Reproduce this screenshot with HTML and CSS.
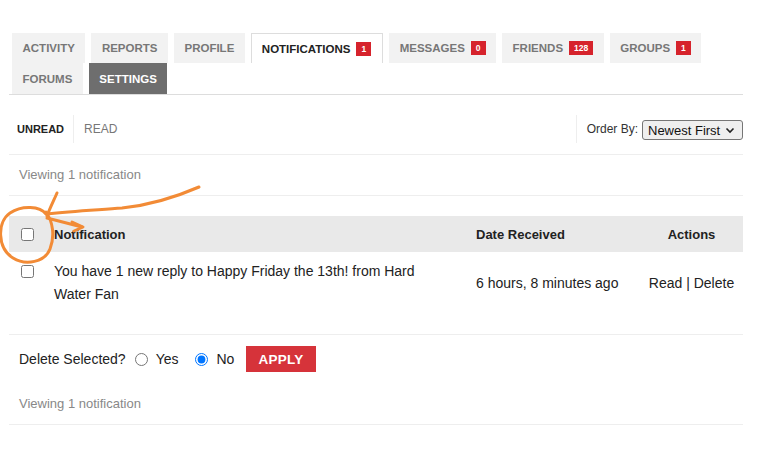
FILE: index.html
```html
<!DOCTYPE html>
<html lang="en">
<head>
<meta charset="utf-8">
<title>Notifications</title>
<link rel="stylesheet" href="styles.css">
</head>
<body>
<div class="page">
  <ul class="tabs">
    <li class="tab">Activity</li>
    <li class="tab">Reports</li>
    <li class="tab">Profile</li>
    <li class="tab current">Notifications <span class="badge">1</span></li>
    <li class="tab">Messages <span class="badge">0</span></li>
    <li class="tab">Friends <span class="badge">128</span></li>
    <li class="tab">Groups <span class="badge">1</span></li>
    <li class="tab">Forums</li>
    <li class="tab dark">Settings</li>
  </ul>

  <div class="subnav">
    <ul class="subtabs">
      <li class="subtab active">Unread</li>
      <li class="subtab">Read</li>
    </ul>
    <div class="order">
      <label class="order-label" for="order">Order By:</label>
      <span class="select-wrap">
        <select id="order" class="select">
          <option>Newest First</option>
          <option>Oldest First</option>
        </select>
        <svg class="chev" width="10" height="7" viewBox="0 0 10 7"><path d="M1.5 1.5 L5 5 L8.5 1.5" fill="none" stroke="#222" stroke-width="1.6"/></svg>
      </span>
    </div>
  </div>

  <div class="count">Viewing 1 notification</div>

  <table class="ntable">
    <thead>
      <tr>
        <th class="c-check"><input type="checkbox" class="cb"></th>
        <th class="c-text">Notification</th>
        <th class="c-date">Date Received</th>
        <th class="c-act">Actions</th>
      </tr>
    </thead>
    <tbody>
      <tr>
        <td class="c-check top"><input type="checkbox" class="cb"></td>
        <td class="c-text">You have 1 new reply to Happy Friday the 13th! from Hard Water Fan</td>
        <td class="c-date">6 hours, 8 minutes ago</td>
        <td class="c-act">Read | Delete</td>
      </tr>
    </tbody>
  </table>

  <div class="bulk">
    <span class="bulk-label">Delete Selected?</span>
    <label class="opt"><input type="radio" name="del" class="radio"> Yes</label>
    <label class="opt"><input type="radio" name="del" class="radio" checked> No</label>
    <button class="apply">APPLY</button>
  </div>

  <div class="count">Viewing 1 notification</div>

  <svg class="scribble" width="766" height="449" viewBox="0 0 766 449">
    <g fill="none" stroke="#f28b36" stroke-width="3" stroke-linecap="round" stroke-linejoin="round">
      <path d="M46 214 C40 206 22 205 10 213 C-3 222 -3 248 13 258 C26 266 45 262 50 249 C55 236 53 222 46 212"/>
      <path d="M57 193 C54 200 50 208 47 216"/>
      <path d="M199 187 C176 197 152 205 122 208 C96 210 72 211 47 214"/>
      <path d="M47 218 L82 227"/>
      <path d="M72 222 L83 227 L74 231"/>
    </g>
  </svg>
</div>
</body>
</html>
```

FILE: styles.css
```css
* { box-sizing: border-box; }

body {
  margin: 0;
  background: #fff;
  font-family: "Liberation Sans", Arial, sans-serif;
  color: #333;
}

.page {
  position: relative;
  width: 766px;
  height: 449px;
  padding: 33px 23px 0 9px;
  overflow: hidden;
}

/* main tabs */
.tabs {
  list-style: none;
  margin: 0;
  padding: 0 0 0 3px;
  display: flex;
  flex-wrap: wrap;
  column-gap: 6px;
  border-bottom: 1px solid #ddd;
}

.tab {
  height: 30px;
  display: flex;
  align-items: center;
  padding: 0 10.5px;
  background: #f2f2f2;
  color: #777;
  font-size: 11.5px;
  font-weight: bold;
  text-transform: uppercase;
}

.tab.current {
  background: #fff;
  color: #222;
  border: 1px solid #ddd;
  border-bottom: none;
  padding: 0 11px 0 10px;
}

.tabs .tab:nth-child(n+8) {
  height: 31px;
}

.tab.dark {
  background: #6e6e6e;
  color: #fff;
}

.badge {
  display: inline-block;
  height: 14px;
  line-height: 14px;
  margin-left: 6px;
  padding: 0 5px;
  background: #d6232c;
  color: #fff;
  font-size: 8.5px;
  font-weight: bold;
  text-align: center;
}

/* sub navigation */
.subnav {
  display: flex;
  justify-content: space-between;
  padding: 20px 0 11px;
  border-bottom: 1px solid #eee;
}

.subtabs {
  list-style: none;
  margin: 0;
  padding: 0;
  display: flex;
}

.subtab {
  height: 28px;
  line-height: 28px;
  padding: 0 10px;
  font-size: 12px;
  text-transform: uppercase;
  color: #777;
}

.subtab.active {
  padding-left: 8px;
  padding-right: 9px;
  color: #222;
  font-weight: bold;
  font-size: 11px;
  border-right: 1px solid #eee;
}

.order {
  display: flex;
  align-items: center;
  height: 28px;
  padding-left: 10px;
  border-left: 1px solid #eee;
}

.order-label {
  font-size: 12px;
  color: #333;
  margin-right: 4px;
}

.select-wrap {
  position: relative;
  display: inline-block;
}

.select {
  appearance: none;
  -webkit-appearance: none;
  width: 101px;
  height: 20px;
  margin: 2px 0 0;
  padding: 0 0 0 5px;
  border: 1px solid #767676;
  border-radius: 3px;
  background: #efefef;
  color: #111;
  font-family: "Liberation Sans", Arial, sans-serif;
  font-size: 13px;
}

.chev {
  position: absolute;
  right: 8px;
  top: 9px;
  pointer-events: none;
}

/* count line */
.count {
  height: 41px;
  line-height: 40px;
  padding-left: 10px;
  font-size: 13px;
  color: #888;
  border-bottom: 1px solid #eee;
}

/* table */
.ntable {
  width: 734px;
  margin-top: 20px;
  border-collapse: collapse;
  table-layout: fixed;
}

.ntable th {
  height: 36px;
  background: #e9e9e9;
  font-size: 13px;
  font-weight: bold;
  color: #222;
  text-align: left;
  padding: 0 10px;
}

.ntable td {
  padding: 8px 10px;
  font-size: 14px;
  line-height: 23px;
  color: #222;
  vertical-align: middle;
}

.ntable .c-check { width: 35px; padding: 0 0 0 8px; }
.ntable td.c-check { vertical-align: top; padding-top: 10px; }
.ntable .c-text { width: 422px; }
.ntable td.c-text { padding-right: 26px; }
.ntable .c-date { width: 174px; }
.ntable .c-act { width: 103px; text-align: center; padding: 0; }
.ntable td.c-act { padding: 8px 0; }

.cb {
  width: 13px;
  height: 13px;
  margin: 3px 3px 3px 4px;
  display: block;
}

/* bulk actions */
.bulk {
  display: flex;
  align-items: center;
  height: 50px;
  margin-top: 20px;
  padding: 0 0 1px 10px;
  border-top: 1px solid #eee;
  font-size: 14px;
  color: #222;
}

.bulk-label { margin-right: 9px; }

.opt {
  display: flex;
  align-items: center;
  margin-right: 17px;
}

.opt + .opt { margin-right: 12px; }

.radio {
  width: 13px;
  height: 13px;
  margin: 0 8px 0 0;
}

.apply {
  height: 26px;
  padding: 0 12px;
  border: none;
  background: #d6333a;
  color: #fff;
  font-family: "Liberation Sans", Arial, sans-serif;
  font-size: 13.5px;
  font-weight: bold;
  letter-spacing: 0.3px;
}

.scribble {
  position: absolute;
  left: 0;
  top: 0;
  pointer-events: none;
}
```
